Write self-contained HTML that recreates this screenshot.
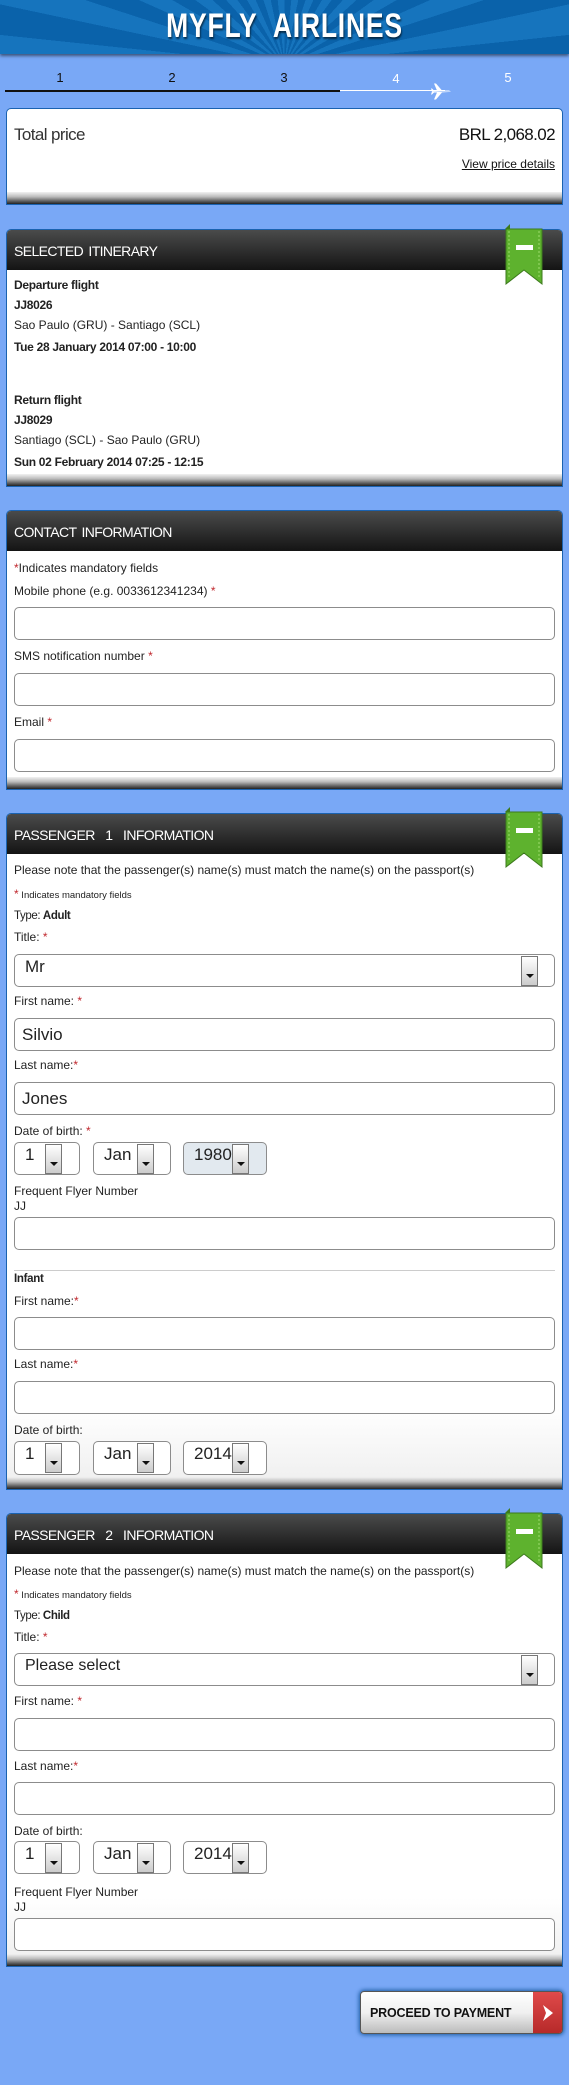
<!DOCTYPE html>
<html><head><meta charset="utf-8"><style>
*{box-sizing:border-box;margin:0;padding:0}
body{width:569px;height:2085px;background:#79a8f6;font-family:"Liberation Sans",Arial,sans-serif;color:#222;position:relative;overflow:hidden}
.a{position:absolute}
.hdr{left:0;top:0;width:569px;height:54px;background:repeating-conic-gradient(from 0deg at 50% 120%,#0a62aa 0deg 6deg,#1674bd 6deg 12deg);box-shadow:0 2px 3px rgba(0,0,0,.5)}
.logo{left:0;width:569px;top:8px;text-align:center;color:#fff;font-family:"Liberation Sans Narrow","Liberation Sans",sans-serif;font-weight:bold;font-size:34px;letter-spacing:1px;transform:scaleX(.78);text-shadow:1px 2px 2px rgba(0,0,0,.6);line-height:36px}
.num{font-size:13px;color:#111;width:20px;text-align:center}
.box{left:6px;width:557px;background:#fff;border:1px solid #1a62b0;border-radius:5px 5px 0 0;overflow:hidden}
.box:after{content:"";position:absolute;left:0;right:0;bottom:0;height:12px;background:linear-gradient(#f2f2f2,#bbb 40%,#222)}
.bar{left:0;top:0;width:100%;height:40px;background:linear-gradient(#4a4b4b,#2a2a2a 60%,#141414);color:#fff;font-size:14px;letter-spacing:-.6px;padding:13px 0 0 7px;word-spacing:2px}
.l{font-size:12px;left:7px;color:#222;white-space:nowrap}
.b{font-weight:bold;letter-spacing:-.3px}
.r{color:#c0282e}
.in{left:7px;width:541px;height:33px;border:1px solid #8c8c8c;border-radius:5px;background:#fff;font-size:17px;padding:6px 0 0 7px}
.sel{height:33px;border:1px solid #8c8c8c;border-radius:5px;background:#fff;font-size:17px;padding:2px 0 0 10px}
.arr{position:absolute;top:1px;width:17px;height:30px;border:1px solid #777;background:linear-gradient(#fff,#ccc)}
.arr:after{content:"";position:absolute;left:4px;top:17px;border-left:4px solid transparent;border-right:4px solid transparent;border-top:4px solid #111}
</style></head><body>
<div class="a hdr"></div>
<div class="a logo">MYFLY&nbsp; AIRLINES</div>

<div class="a num" style="left:50px;top:70px">1</div>
<div class="a num" style="left:162px;top:70px">2</div>
<div class="a num" style="left:274px;top:70px">3</div>
<div class="a num" style="left:386px;top:71px;color:#fff">4</div>
<div class="a num" style="left:498px;top:70px;color:#fff">5</div>
<div class="a" style="left:5px;top:90px;width:335px;height:2px;background:#111"></div>
<div class="a" style="left:340px;top:90px;width:105px;height:1px;background:#fff"></div>
<svg class="a" style="left:430px;top:83px" width="22" height="18" viewBox="0 0 22 18"><path d="M1 8.5h20l-2-1h-7l-6-7h-2l3 7h-3l-2-2h-1l1 3-1 3h1l2-2h3l-3 7h2l6-7h7z" fill="#fff"/></svg>

<div class="a box" style="top:108px;height:97px">
 <div class="a" style="left:7px;top:16px;font-size:17px;letter-spacing:-.6px;color:#333">Total price</div>
 <div class="a" style="right:7px;top:16px;font-size:17px;letter-spacing:-.6px;color:#111">BRL 2,068.02</div>
 <div class="a" style="right:7px;top:48px;font-size:12px;color:#111;text-decoration:underline">View price details</div>
</div>

<div class="a box" style="top:229px;height:258px">
 <div class="a bar">SELECTED ITINERARY</div>
 <div class="a l b" style="top:48px">Departure flight</div>
 <div class="a l b" style="top:68px">JJ8026</div>
 <div class="a l" style="top:88px">Sao Paulo (GRU) - Santiago (SCL)</div>
 <div class="a l b" style="top:110px">Tue 28 January 2014 07:00 - 10:00</div>
 <div class="a l b" style="top:163px">Return flight</div>
 <div class="a l b" style="top:183px">JJ8029</div>
 <div class="a l" style="top:203px">Santiago (SCL) - Sao Paulo (GRU)</div>
 <div class="a l b" style="top:225px">Sun 02 February 2014 07:25 - 12:15</div>
</div>

<div class="a box" style="top:510px;height:280px">
 <div class="a bar">CONTACT INFORMATION</div>
 <div class="a l" style="top:50px"><span class="r">*</span>Indicates mandatory fields</div>
 <div class="a l" style="top:73px">Mobile phone (e.g. 0033612341234) <span class="r">*</span></div>
 <div class="a in" style="top:96px"></div>
 <div class="a l" style="top:138px">SMS notification number <span class="r">*</span></div>
 <div class="a in" style="top:162px"></div>
 <div class="a l" style="top:204px">Email <span class="r">*</span></div>
 <div class="a in" style="top:228px"></div>
</div>

<div class="a box" style="top:813px;height:677px;background:linear-gradient(#fff 88%,#eee)">
 <div class="a bar">PASSENGER&nbsp; 1&nbsp; INFORMATION</div>
 <div class="a l" style="top:49px">Please note that the passenger(s) name(s) must match the name(s) on the passport(s)</div>
 <div class="a l" style="top:73px;font-size:9.5px"><span class="r" style="font-size:12px">*</span> Indicates mandatory fields</div>
 <div class="a l" style="top:96px;font-size:11.5px;letter-spacing:-.4px">Type: <b>Adult</b></div>
 <div class="a l" style="top:116px">Title: <span class="r">*</span></div>
 <div class="a sel" style="left:7px;top:140px;width:541px">Mr<div class="arr" style="left:506px"></div></div>
 <div class="a l" style="top:180px">First name: <span class="r">*</span></div>
 <div class="a in" style="top:204px">Silvio</div>
 <div class="a l" style="top:244px">Last name:<span class="r">*</span></div>
 <div class="a in" style="top:268px">Jones</div>
 <div class="a l" style="top:310px">Date of birth: <span class="r">*</span></div>
 <div class="a sel" style="left:7px;top:328px;width:66px">1<div class="arr" style="left:30px"></div></div>
 <div class="a sel" style="left:86px;top:328px;width:78px">Jan<div class="arr" style="left:43px"></div></div>
 <div class="a sel" style="left:176px;top:328px;width:84px;background:#e2e9ef">1980<div class="arr" style="left:48px"></div></div>
 <div class="a l" style="top:370px">Frequent Flyer Number</div>
 <div class="a l" style="top:385px">JJ</div>
 <div class="a in" style="top:403px"></div>
 <div class="a" style="left:7px;top:456px;width:541px;height:1px;background:#ccc"></div>
 <div class="a l b" style="top:459px;font-size:11.5px">Infant</div>
 <div class="a l" style="top:480px">First name:<span class="r">*</span></div>
 <div class="a in" style="top:503px"></div>
 <div class="a l" style="top:543px">Last name:<span class="r">*</span></div>
 <div class="a in" style="top:567px"></div>
 <div class="a l" style="top:609px">Date of birth:</div>
 <div class="a sel" style="left:7px;top:627px;width:66px;height:34px">1<div class="arr" style="left:30px"></div></div>
 <div class="a sel" style="left:86px;top:627px;width:78px;height:34px">Jan<div class="arr" style="left:43px"></div></div>
 <div class="a sel" style="left:176px;top:627px;width:84px;height:34px">2014<div class="arr" style="left:48px"></div></div>
</div>

<div class="a box" style="top:1513px;height:454px;background:linear-gradient(#fff 85%,#eee)">
 <div class="a bar">PASSENGER&nbsp; 2&nbsp; INFORMATION</div>
 <div class="a l" style="top:50px">Please note that the passenger(s) name(s) must match the name(s) on the passport(s)</div>
 <div class="a l" style="top:73px;font-size:9.5px"><span class="r" style="font-size:12px">*</span> Indicates mandatory fields</div>
 <div class="a l" style="top:96px;font-size:11.5px;letter-spacing:-.4px">Type: <b>Child</b></div>
 <div class="a l" style="top:116px">Title: <span class="r">*</span></div>
 <div class="a sel" style="left:7px;top:139px;width:541px;font-size:16px;padding-top:3px">Please select<div class="arr" style="left:506px"></div></div>
 <div class="a l" style="top:180px">First name: <span class="r">*</span></div>
 <div class="a in" style="top:204px"></div>
 <div class="a l" style="top:245px">Last name:<span class="r">*</span></div>
 <div class="a in" style="top:268px"></div>
 <div class="a l" style="top:310px">Date of birth:</div>
 <div class="a sel" style="left:7px;top:327px;width:66px">1<div class="arr" style="left:30px"></div></div>
 <div class="a sel" style="left:86px;top:327px;width:78px">Jan<div class="arr" style="left:43px"></div></div>
 <div class="a sel" style="left:176px;top:327px;width:84px">2014<div class="arr" style="left:48px"></div></div>
 <div class="a l" style="top:371px">Frequent Flyer Number</div>
 <div class="a l" style="top:386px">JJ</div>
 <div class="a in" style="top:404px"></div>
</div>

<svg class="a" style="left:504px;top:224px" width="42" height="62" viewBox="0 0 42 62"><path d="M1 5l5-5v5z" fill="#3c7a1c"/><path d="M2 5h36v55l-18-14-18 14z" fill="#5eb22e" stroke="#3c7a1c"/><path d="M5 7v46M35 7v46" stroke="#9fdc6f" stroke-dasharray="2 2"/><rect x="12" y="21" width="17" height="5" fill="#fff"/></svg>
<svg class="a" style="left:504px;top:807px" width="42" height="62" viewBox="0 0 42 62"><path d="M1 5l5-5v5z" fill="#3c7a1c"/><path d="M2 5h36v55l-18-14-18 14z" fill="#5eb22e" stroke="#3c7a1c"/><path d="M5 7v46M35 7v46" stroke="#9fdc6f" stroke-dasharray="2 2"/><rect x="12" y="21" width="17" height="5" fill="#fff"/></svg>
<svg class="a" style="left:504px;top:1508px" width="42" height="62" viewBox="0 0 42 62"><path d="M1 5l5-5v5z" fill="#3c7a1c"/><path d="M2 5h36v55l-18-14-18 14z" fill="#5eb22e" stroke="#3c7a1c"/><path d="M5 7v46M35 7v46" stroke="#9fdc6f" stroke-dasharray="2 2"/><rect x="12" y="21" width="17" height="5" fill="#fff"/></svg>

<div class="a" style="left:360px;top:1991px;width:203px;height:43px;border-radius:4px;background:linear-gradient(#fff,#f0f0f0 50%,#bbb);border:1px solid #555;box-shadow:0 0 4px 1px #1a5aa0;overflow:hidden">
 <div class="a" style="left:9px;top:14px;font-size:12.5px;font-weight:bold;color:#111;letter-spacing:-.2px">PROCEED TO PAYMENT</div>
 <div class="a" style="right:0;top:0;width:29px;height:43px;background:linear-gradient(#e04a4a,#b52828)"><svg width="29" height="43"><path d="M10 13l10 8-10 8 3-8z" fill="#fff"/></svg></div>
</div>
</body></html>
